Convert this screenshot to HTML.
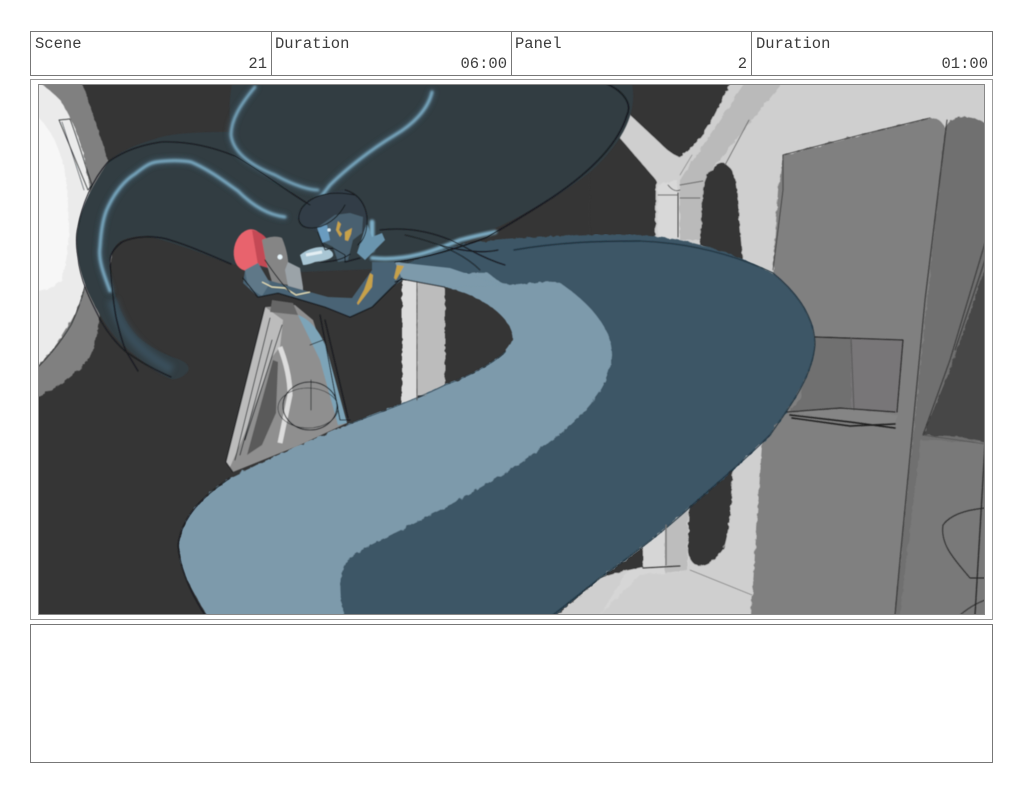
<!DOCTYPE html>
<html lang="en"><head><meta charset="utf-8"><title>Storyboard</title>
<style>
html,body{margin:0;padding:0;background:#fff;width:1024px;height:793px;overflow:hidden}
.b{position:absolute;box-sizing:border-box;border:1px solid #777}
.c{position:absolute;top:31px;height:45px;font:15.5px/1 "Liberation Mono",monospace;color:#3c3c3c}
.c span{position:absolute}
.l{left:5px;top:6px}.r{right:4px;top:26px}
.d{position:absolute;top:31px;height:45px;width:1px;background:#777}
svg{position:absolute;left:0;top:0}
</style></head><body>
<div class="b" style="left:30px;top:31px;width:963px;height:45px"></div>
<div class="d" style="left:271px"></div><div class="d" style="left:511px"></div><div class="d" style="left:751px"></div>
<div class="c" style="left:30px;width:241px"><span class="l">Scene</span><span class="r">21</span></div>
<div class="c" style="left:270px;width:241px"><span class="l">Duration</span><span class="r">06:00</span></div>
<div class="c" style="left:510px;width:241px"><span class="l">Panel</span><span class="r">2</span></div>
<div class="c" style="left:751px;width:241px"><span class="l">Duration</span><span class="r">01:00</span></div>
<div class="b" style="left:30px;top:79px;width:963px;height:541px;border-color:#999"></div>
<div class="b" style="left:30px;top:624px;width:963px;height:139px"></div>
<svg width="1024" height="793" viewBox="0 0 1024 793">
<defs>
<clipPath id="cp"><rect x="38" y="84" width="947" height="531"/></clipPath>
<filter id="s" x="-5%" y="-5%" width="110%" height="110%"><feGaussianBlur stdDeviation="0.4"/></filter>
<filter id="g" x="-20%" y="-20%" width="140%" height="140%"><feGaussianBlur stdDeviation="1"/></filter>
<filter id="gg" x="-20%" y="-20%" width="140%" height="140%"><feGaussianBlur stdDeviation="3"/></filter>
<filter id="r" x="0" y="0" width="100%" height="100%"><feTurbulence type="fractalNoise" baseFrequency=".18" numOctaves="2" seed="4" result="n"/><feDisplacementMap in="SourceGraphic" in2="n" scale="3.5"/><feGaussianBlur stdDeviation="0.4"/></filter>
</defs>
<g clip-path="url(#cp)">
<rect x="38" y="84" width="947" height="531" fill="#353535"/>
<g filter="url(#r)">
<path d="M600,70H1000V630H540L600,578Z" fill="#cfcfcf"/>
<path d="M620,70H737L712,120 C703,135 692,150 680,157 C672,155 665,148 660,143L630,115 615,100Z" fill="#353535"/>
<path d="M590,110L620,138 656,180 655,250H590Z" fill="#353535"/>
<path d="M753,70H793L717,163 C710,170 706,175 703,190L700,240H680V180Z" fill="#bababa"/>
<path d="M677,180L680,240H658V185Z" fill="#d8d8d8"/>
<path d="M700,245L703,190 C705,175 713,165 722,163 C731,165 736,175 737,190L743,265Z" fill="#353535"/>
<path d="M783,155L860,135 930,118 C938,118 943,122 945,128L897,630H750L762,443 773,270 778,190Z" fill="#808080"/>
<path d="M945,128C950,118 958,116 967,117 C977,118 983,122 1000,130V630H893Z" fill="#707070"/>
<path d="M898,630L921,440 1000,443V630Z" fill="#797979"/>
<path d="M923,435L950,370 1000,225V445L960,437Z" fill="#474747"/>
<path d="M815,337H851V410L790,412 800,400Z" fill="#6f6f6f"/>
<path d="M851,338L903,340 897,412 851,410Z" fill="#787678"/>
<path d="M790,412L851,408 897,415 895,428 840,420Z" fill="#858585"/>
<path d="M600,615L643,547 690,505 688,565 680,572 640,575Z" fill="#d6d6d6"/>
<path d="M665,525L688,505 687,570 665,573Z" fill="#bdbdbd"/>
<path d="M600,578L643,547V567L620,572Z" fill="#353535"/>
<path d="M689,505L733,465 732,490C731,515 728,535 724,548 C716,560 706,566 698,566 C692,564 689,558 688,552Z" fill="#353535"/>
<path d="M402,280L417,280V410H402Z" fill="#dcdcdc"/>
<path d="M417,280L445,286V395H417Z" fill="#bcbcbc"/>
<path d="M30,70H78C88,100 100,135 108,161L112,260 85,284 100,314 C98,335 94,350 88,360 C72,378 55,390 30,400Z" fill="#808080"/>
<path d="M30,78C45,85 55,95 61,101 C72,120 80,140 84,157 L90,190 82,227 80,244 85,284 C82,300 76,312 71,321 C60,340 48,358 30,375Z" fill="#ebebeb"/>
<path d="M30,110C50,125 62,150 66,180 C70,220 70,250 62,280 C50,290 42,292 30,290Z" fill="#f7f7f7"/>
</g>
<g filter="url(#s)">
<path d="M232,84H632C638,115 620,145 590,172 C555,200 510,222 470,240 C445,252 420,262 400,268 L300,272 C280,270 255,268 231,264 C205,255 185,246 148,236 C130,236 118,240 115,247 C110,255 109,262 110,271 C112,285 116,298 121,311 C126,322 132,331 138,337 C150,347 165,355 178,359 C186,362 190,366 188,371 C185,376 178,380 171,379 C155,372 140,360 125,347 C115,338 106,326 98,311 C88,293 80,275 78,257 C76,245 76,235 78,227 C80,210 90,190 108,162 C122,150 138,144 155,139 C170,133 200,132 232,132 C228,115 230,95 232,84Z" fill="#323c43"/>
</g>
<path d="M112,300C120,330 140,352 172,370" fill="none" stroke="#3d5666" stroke-width="10" filter="url(#gg)" opacity=".7"/>
<g filter="url(#r)">
<path d="M400,268C430,250 470,240 520,238 C570,236 610,232 650,236 C700,240 750,260 775,275 C800,295 815,320 815,345 C812,375 795,400 770,435 C745,460 715,485 690,507 C660,535 625,560 600,578 L540,628 H215 C195,595 178,570 179,545 C182,515 205,495 230,478 C270,458 310,440 347,425 C380,412 415,400 445,385 C480,372 510,355 513,337 C510,315 480,295 445,287 L420,278 Z" fill="#3d5666"/>
<path d="M420,278C445,277 470,272 488,273 C495,278 500,285 515,285 C535,283 550,280 560,283 C585,300 612,325 612,355 C610,385 590,408 565,430 C530,458 480,490 430,515 C400,532 365,545 347,560 C340,570 338,590 346,628 H215 C195,595 178,570 179,545 C182,515 205,495 230,478 C270,458 310,440 347,425 C380,412 415,400 445,385 C480,372 510,355 513,337 C510,315 480,295 445,287Z" fill="#7d9aab"/>
</g>
<g filter="url(#s)">
<g fill="none" stroke="#4d7186" filter="url(#gg)" stroke-linecap="round" opacity=".7">
<path d="M255,87C240,105 231,120 231,135 C233,152 250,165 275,175 C295,186 310,190 318,190" stroke-width="5"/>
<path d="M432,92C428,110 412,125 395,135 C370,150 345,170 330,185 L320,198" stroke-width="5"/>
<path d="M110,291C104,275 98,260 100,247 C101,230 104,215 108,207 C115,192 125,180 135,174 C145,166 150,163 156,162 C170,160 180,160 191,162 C210,170 225,182 238,191 C252,205 268,215 285,217" stroke-width="5"/>
</g>
<g fill="none" stroke="#7fb0c9" filter="url(#g)" stroke-linecap="round">
<path d="M255,87C240,105 231,120 231,135 C233,152 250,165 275,175 C295,186 310,190 318,190" stroke-width="2.6"/>
<path d="M432,92C428,110 412,125 395,135 C370,150 345,170 330,185 L320,198" stroke-width="3"/>
<path d="M110,291C104,275 98,260 100,247 C101,230 104,215 108,207 C115,192 125,180 135,174 C145,166 150,163 156,162 C170,160 180,160 191,162 C210,170 225,182 238,191 C252,205 268,215 285,217" stroke-width="3"/>
<path d="M372,258C410,262 440,248 460,240 C475,236 485,234 495,232" stroke-width="4"/>
<path d="M372,222L372,250" stroke-width="5"/>
</g>
<path d="M265,307L295,305 313,320 333,380 347,423 300,445 233,472 226,462Z" fill="#8f8f8f"/>
<path d="M265,307L283,320 280,347 272,357 245,433 230,467 226,462Z" fill="#bcbcbc"/>
<path d="M273,360L278,362 276,413 262,445 247,455Z" fill="#5a5a5a"/>
<path d="M298,315C312,320 322,335 327,350 L347,423 338,425 320,360Z" fill="#7da4b8"/>
<path d="M280,347C287,365 290,380 290,395 L280,443" stroke="#dcdcdc" stroke-width="5" fill="none"/>
<path d="M272,300L293,303 298,315 270,312Z" fill="#666"/>
<ellipse cx="249" cy="250" rx="15" ry="21" fill="#e8636d" transform="rotate(12 249 250)"/>
<path d="M252,230C262,232 268,238 270,246 L268,268 258,265Z" fill="#c44a55"/>
<path d="M262,240C270,236 278,236 282,238 C287,250 290,262 288,285 L272,282 266,262Z" fill="#858585"/>
<circle cx="280" cy="257" r="2.5" fill="#e6f4fa"/>
<path d="M288,262L300,268 303,287 303,298 290,297 285,270Z" fill="#9ba3a8"/>
<path d="M245,270L258,263 268,280 292,287 328,297 352,298 372,270 402,263 405,278 392,287 372,307 350,317 325,307 278,293 258,297 243,283Z" fill="#4a6374"/>
<path d="M245,270L258,263 270,283 262,296 248,287Z" fill="#5f7888"/>
<path d="M300,255C306,250 314,247 322,247 C330,249 334,252 333,256 C330,260 322,261 315,262 C310,264 306,265 303,265Z" fill="#a9c6d4"/>
<path d="M306,255L322,252" stroke="#e3eef3" stroke-width="3" fill="none"/>
<path d="M297,217C300,205 315,193 345,190 C358,195 366,205 367,222 L363,233 345,215 318,232 305,227Z" fill="#333e46"/>
<path d="M318,227L335,215 350,213 363,217 362,233 353,240 348,260 338,262 333,247 323,242Z" fill="#48606f"/>
<path d="M317,227L327,225 330,240 322,243Z" fill="#6b9cc0"/>
<circle cx="329" cy="230" r="1.6" fill="#dfeef5"/>
<path d="M367,223L372,237 382,233 385,240 365,260 357,253Z" fill="#6a95ae"/>
<path d="M372,262L400,262 405,278 392,287 372,300Z" fill="#4a6374"/>
<path d="M395,262L450,268 500,285 445,287 402,279Z" fill="#7d9aab"/>
<g fill="#c7a24a">
<path d="M338,221L341,224 339,230 342,234 340,237 336,230Z"/>
<path d="M345,232L352,228 351,234 348,241 345,240Z"/>
<path d="M370,273L373,275 372,287 358,305 357,303 364,290Z"/>
<path d="M397,265L404,266 396,280 394,278Z"/>
</g>
<path d="M262,282L272,287 285,288 296,295 310,292" stroke="#e6e0b8" stroke-width="1.2" fill="none"/>
<g fill="none" stroke="#14191c" stroke-linecap="round" stroke-linejoin="round">
<path d="M607,84C625,92 632,105 627,115 C618,145 590,172 553,197 C525,215 505,227 487,237 C460,248 425,258 395,262" stroke-width="1.3"/>
<path d="M171,377C155,370 140,362 125,351 C115,342 108,333 101,321 C90,300 80,280 78,257 C76,245 76,235 78,227 C82,205 92,180 108,162 C125,150 142,145 161,142 C185,141 210,146 235,156 C260,170 285,190 310,205" stroke-width="1"/>
<path d="M231,264C210,255 190,246 170,240 C155,235 135,236 122,242 C114,248 110,254 110,261 C111,280 113,300 116,317 C119,330 122,342 126,351 L138,371" stroke-width="1.1"/>
<path d="M38,367C50,355 62,340 71,325 C78,310 83,295 85,285" stroke-width=".7"/>
<path d="M59,120L70,119 C78,140 85,165 92,185 L88,190Z" stroke-width=".7"/>
<path d="M62,122L84,190" stroke-width=".5"/>
<path d="M355,195C330,190 312,195 302,208 C295,220 300,228 312,228 C325,228 338,218 345,205" stroke-width="1"/>
<path d="M345,190C362,195 368,210 367,225 C366,235 362,242 358,245" stroke-width="1"/>
<path d="M318,232L325,250 333,248 345,255 345,262 360,258" stroke-width="1"/>
<path d="M380,230C415,226 445,235 470,250 C485,258 495,262 505,265" stroke-width="1"/>
<path d="M405,235C440,243 465,255 480,270" stroke-width=".7"/>
<path d="M440,245C465,252 485,253 498,250" stroke-width="1"/>
<path d="M514,250C560,242 600,241 640,241" stroke-width="1.2" stroke="#1d2f3b"/>
<path d="M640,241C690,243 735,255 773,273 C800,295 815,320 815,345 C812,375 795,400 770,435 C745,460 715,485 690,507 C660,535 625,560 600,578 L553,615" stroke-width="1" stroke="#1d2f3b"/>
<path d="M230,478C205,495 182,515 178,545 C180,570 192,595 205,615" stroke-width="1"/>
<path d="M347,425C380,412 415,400 445,385 C470,376 495,362 505,352" stroke-width=".7" stroke="#2c4250"/>
<path d="M445,287L402,279 395,282" stroke-width="1"/>
<path d="M320,262C335,262 345,258 350,254" stroke-width="1"/>
<path d="M243,278L258,297 278,293 325,307 350,317 372,307 392,287 402,278" stroke-width="1.1"/>
<path d="M265,260C275,275 283,285 290,292" stroke-width="1"/>
<path d="M265,307L226,462 233,472M270,318L235,460M282,325L245,440M272,340L240,455" stroke-width=".8"/>
<path d="M320,315L340,420 350,420M325,320L348,418" stroke-width="1"/>
<path d="M310,345L323,340" stroke-width=".8"/>
<ellipse cx="310" cy="406" rx="27" ry="24" stroke-width="1"/>
<ellipse cx="308" cy="408" rx="30" ry="20" stroke-width=".6"/>
<path d="M311,380V410" stroke-width=".8"/>
<path d="M417,282V400" stroke="#444" stroke-width=".8"/>
<path d="M783,155V190L773,270" stroke-width=".7" stroke="#333"/>
<path d="M783,155L860,135 930,118" stroke-width=".9" stroke="#333"/>
<path d="M947,120L925,300 900,560 895,615" stroke-width=".9" stroke="#2a2a2a"/>
<path d="M985,243L950,360 923,435M985,260L955,350" stroke-width=".8" stroke="#2a2a2a"/>
<path d="M923,435L985,444" stroke-width=".5" stroke="#444"/>
<path d="M985,445L975,615" stroke-width="1.2" stroke="#222"/>
<path d="M985,508C965,510 950,515 943,525 C940,545 955,560 970,578 L985,578" stroke-width=".9" stroke="#222"/>
<path d="M960,615C972,605 980,602 985,600" stroke-width=".8" stroke="#222"/>
<path d="M815,337L903,340 897,412" stroke-width="1" stroke="#222"/>
<path d="M851,338L854,410" stroke-width=".9" stroke="#555"/>
<path d="M787,412L840,408 895,412" stroke-width=".9" stroke="#222"/>
<path d="M790,415L850,422 895,428M792,418L850,426 895,424" stroke-width="1.4" stroke="#1c1c1c"/>
<path d="M643,568L680,566" stroke-width="1" stroke="#222"/>
<path d="M690,570L752,595" stroke-width=".5" stroke="#555"/>
<path d="M666,525L666,565" stroke-width="1.3" stroke="#777"/>
<path d="M678,193V237" stroke-width="1" stroke="#444"/>
<path d="M668,185C672,190 676,192 680,190M658,195H678M680,185L703,181M680,198H700" stroke-width=".7" stroke="#555"/>
<path d="M749,120L725,165" stroke-width=".7" stroke="#555"/>
<path d="M680,175L692,155" stroke-width=".6" stroke="#777"/>
</g>
</g></g>
<rect x="38.5" y="84.5" width="946" height="530" fill="none" stroke="#888" stroke-width="1"/>
</svg>
</body></html>
